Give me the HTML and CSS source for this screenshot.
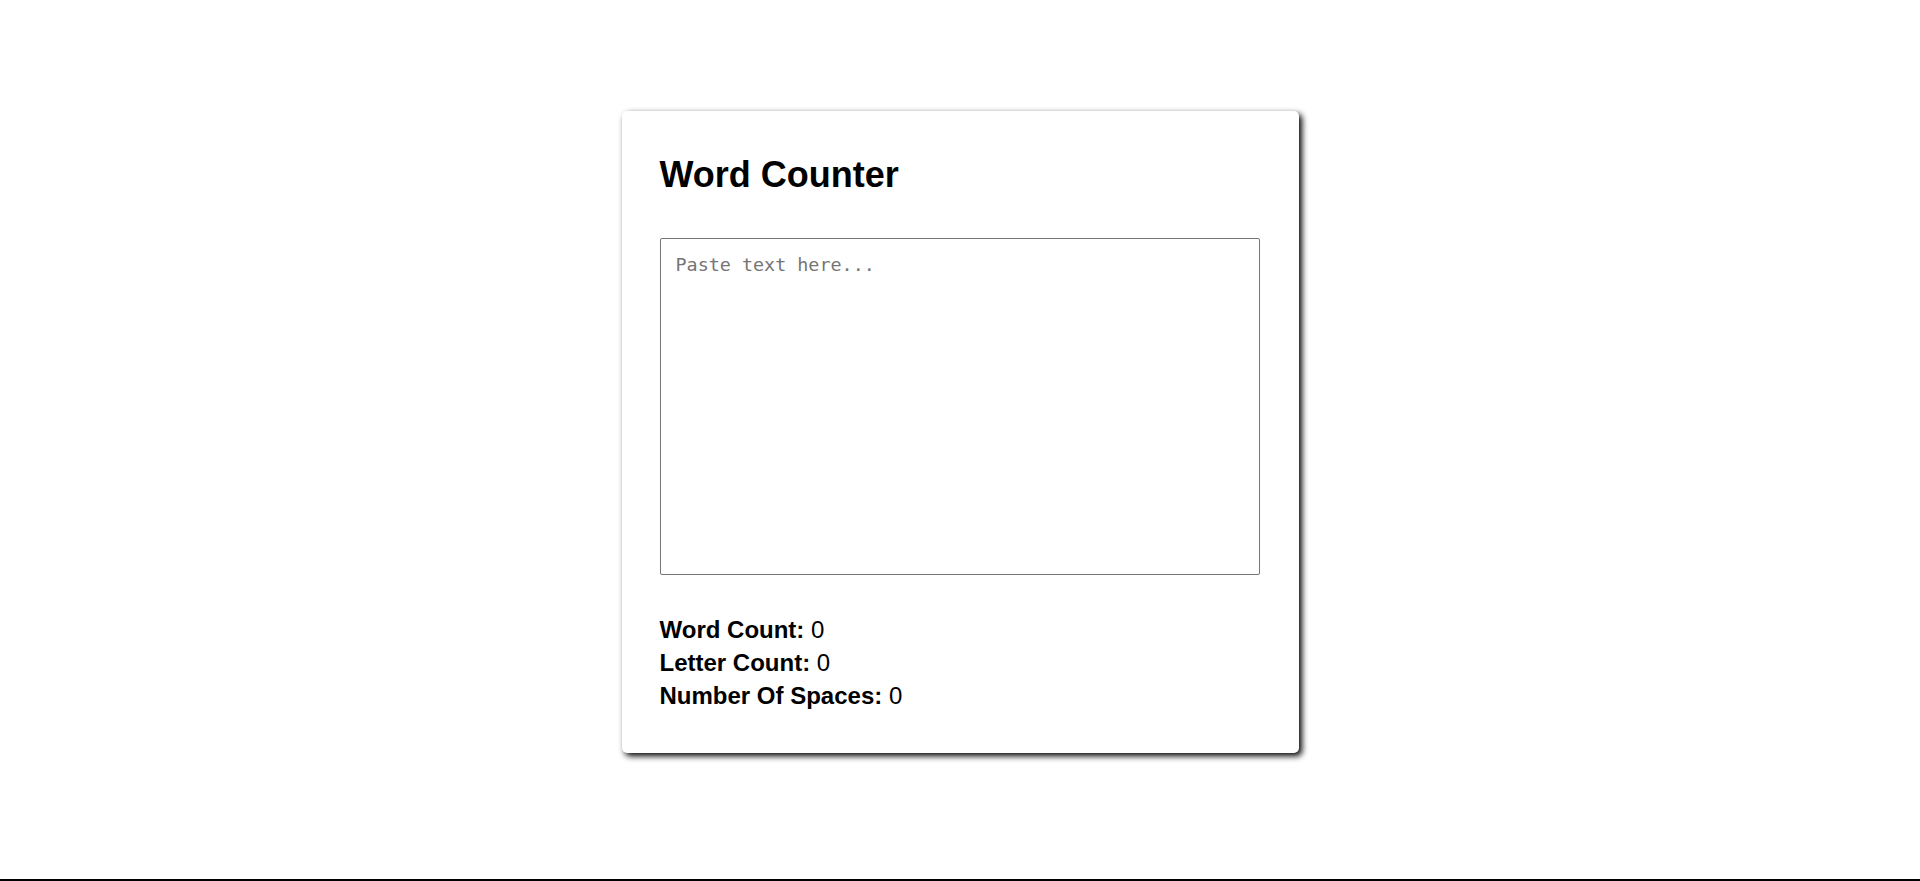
FILE: index.html
```html
<!DOCTYPE html>
<html lang="en">
<head>
<meta charset="utf-8">
<title>Word Counter</title>
<link rel="stylesheet" href="styles.css">
</head>
<body>
<main class="page">
  <section class="card">
    <h1 class="title">Word Counter</h1>
    <textarea class="input" placeholder="Paste text here..."></textarea>
    <div class="stats">
      <div class="stat"><span class="label">Word Count:</span> 0</div>
      <div class="stat"><span class="label">Letter Count:</span> 0</div>
      <div class="stat"><span class="label">Number Of Spaces:</span> 0</div>
    </div>
  </section>
</main>
</body>
</html>
```
FILE: styles.css
```css
html, body {
  margin: 0;
  padding: 0;
  background: #fff;
}
body {
  font-family: "Liberation Sans", Arial, sans-serif;
  color: #000;
}
.page {
  box-sizing: border-box;
  height: 881px;
  border-bottom: 2px solid #000;
  padding-top: 111px;
  display: flex;
  justify-content: center;
  align-items: flex-start;
}
.card {
  box-sizing: border-box;
  width: 677px;
  padding: 43px 38px 41px 38px;
  background: #fff;
  border-radius: 5px;
  box-shadow: 3px 3px 6px #000;
  display: flex;
  flex-direction: column;
}
.title {
  margin: 0;
  font-size: 36px;
  font-weight: bold;
}
.input {
  box-sizing: border-box;
  margin-top: 42px;
  width: 600px;
  height: 337px;
  padding: 15px 15px;
  border: 1px solid #767676;
  border-radius: 2px;
  font-family: "DejaVu Sans Mono", monospace;
  font-size: 18.4px;
  resize: none;
  outline: none;
}
.input::placeholder {
  color: #757575;
}
.stats {
  margin-top: 38px;
  font-size: 24px;
  line-height: 33px;
}
.label {
  font-weight: bold;
}
```
